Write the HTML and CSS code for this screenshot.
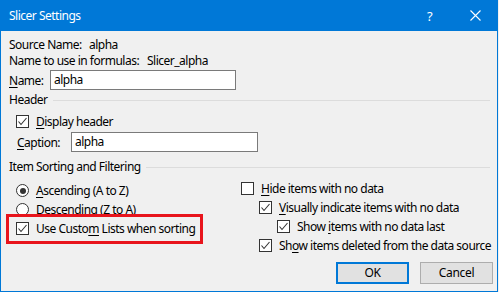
FILE: index.html
```html
<!DOCTYPE html>
<html>
<head>
<meta charset="utf-8">
<link rel="stylesheet" href="styles.css">
</head>
<body>
<div class="dialog">
  <div class="titlebar">
    <span class="title">Slicer Settings</span>
    <span class="tb-btn help">?</span>
    <span class="tb-btn close"><svg width="11" height="11" viewBox="0 0 11 11"><path d="M0.5 0.5 L10.5 10.5 M10.5 0.5 L0.5 10.5" stroke="#fff" stroke-width="1.1" fill="none"/></svg></span>
  </div>
  <div class="content">
    <div class="line first"><span class="lbl lbl-src">Source Name:</span><span>alpha</span></div>
    <div class="line"><span class="lbl lbl-formula">Name to use in formulas:</span><span>Slicer_alpha</span></div>
    <div class="field name-field"><span class="lbl lbl-name"><u>N</u>ame:</span><div class="textbox name-box">alpha</div></div>

    <div class="group-title header-title"><span>Header</span><span class="rule"></span></div>
    <div class="check-row display-row"><span class="cb checked"><svg width="11" height="11" viewBox="0 0 11 11"><path d="M1.5 5.5 L4 8.5 L9.5 2" stroke="#333" stroke-width="1.1" fill="none"/></svg></span><span><u>D</u>isplay header</span></div>
    <div class="field caption-field"><span class="lbl lbl-caption"><u>C</u>aption:</span><div class="textbox caption-box">alpha</div></div>

    <div class="group-title sort-title"><span>Item Sorting and Filtering</span><span class="rule"></span></div>
    <div class="columns">
      <div class="col-left">
        <div class="check-row opt"><span class="radio on"><span class="dot"></span></span><span><u>A</u>scending (A to Z)</span></div>
        <div class="check-row opt"><span class="radio"></span><span>Descending (Z to A)</span></div>
        <div class="check-row opt highlight"><span class="cb checked"><svg width="11" height="11" viewBox="0 0 11 11"><path d="M1.5 5.5 L4 8.5 L9.5 2" stroke="#333" stroke-width="1.1" fill="none"/></svg></span><span>Use Custo<u>m</u> Lists when sorting</span></div>
      </div>
      <div class="col-right">
        <div class="check-row ropt"><span class="cb"></span><span><u>H</u>ide items with no data</span></div>
        <div class="check-row ropt lvl1"><span class="cb checked"><svg width="11" height="11" viewBox="0 0 11 11"><path d="M1.5 5.5 L4 8.5 L9.5 2" stroke="#333" stroke-width="1.1" fill="none"/></svg></span><span><u>V</u>isually indicate items with no data</span></div>
        <div class="check-row ropt lvl2"><span class="cb checked"><svg width="11" height="11" viewBox="0 0 11 11"><path d="M1.5 5.5 L4 8.5 L9.5 2" stroke="#333" stroke-width="1.1" fill="none"/></svg></span><span>Show <u>i</u>tems with no data last</span></div>
        <div class="check-row ropt lvl1"><span class="cb checked"><svg width="11" height="11" viewBox="0 0 11 11"><path d="M1.5 5.5 L4 8.5 L9.5 2" stroke="#333" stroke-width="1.1" fill="none"/></svg></span><span>Sh<u>o</u>w items deleted from the data source</span></div>
      </div>
    </div>
    <div class="footer">
      <button class="btn default">OK</button>
      <button class="btn">Cancel</button>
    </div>
  </div>
</div>
</body>
</html>
```

FILE: styles.css
```css
html, body {
  margin: 0;
  padding: 0;
  background: #f0f0f0;
}
body {
  font-family: "Noto Sans", "Open Sans", sans-serif;
  font-size: 12px;
  letter-spacing: -0.5px;
  color: #000;
}
u {
  text-decoration-thickness: 1px;
  text-underline-offset: 2px;
}
.dialog {
  width: 498px;
  height: 292px;
  box-sizing: border-box;
  display: flex;
  flex-direction: column;
}
.titlebar {
  height: 31px;
  background: #0078d7;
  color: #fff;
  display: flex;
  align-items: center;
  flex: none;
}
.title {
  flex: 1;
  padding-left: 9px;
  font-size: 12px;
}
.tb-btn {
  width: 45px;
  height: 31px;
  display: flex;
  align-items: center;
  justify-content: center;
}
.help {
  margin-right: 1px;
  font-size: 13px;
}
.content {
  flex: 1;
  background: #f0f0f0;
  border: 1px solid #0078d7;
  border-top: none;
  padding-left: 8px;
  padding-right: 4px;
}
.lbl {
  flex: none;
}
.line {
  height: 16px;
  line-height: 16px;
  display: flex;
}
.line.first {
  margin-top: 6px;
}
.lbl-src { width: 80px; }
.lbl-formula { width: 138px; }
.field {
  display: flex;
  align-items: center;
  height: 20px;
}
.name-field { margin-top: 1px; }
.lbl-name { width: 41px; }
.caption-field { margin-top: 3px; padding-left: 8px; }
.lbl-caption { width: 54px; }
.textbox {
  box-sizing: border-box;
  height: 20px;
  line-height: 18px;
  background: #fff;
  border: 1px solid #7a7a7a;
  padding-left: 3px;
  flex: none;
}
.name-box { width: 186px; }
.caption-box { width: 187px; }
.group-title {
  height: 16px;
  line-height: 16px;
  display: flex;
  align-items: center;
}
.group-title .rule {
  flex: 1;
  height: 1px;
  background: #dcdcdc;
  margin-left: 5px;
  margin-right: 3px;
}
.header-title { margin-top: 2px; }
.sort-title { margin-top: 7px; }
.check-row {
  display: flex;
  align-items: center;
  white-space: nowrap;
}
.display-row {
  height: 16px;
  margin-top: 5px;
  padding-left: 7px;
}
.cb {
  box-sizing: border-box;
  width: 13px;
  height: 13px;
  border: 1px solid #333;
  background: #fff;
  margin-right: 7px;
  display: flex;
  align-items: center;
  justify-content: center;
  flex: none;
}
.radio {
  box-sizing: border-box;
  width: 13px;
  height: 13px;
  border: 1px solid #333;
  border-radius: 50%;
  background: #fff;
  margin-right: 7px;
  display: flex;
  align-items: center;
  justify-content: center;
  flex: none;
}
.radio .dot {
  width: 6px;
  height: 6px;
  border-radius: 50%;
  background: #333;
}
.columns {
  display: flex;
  height: 80px;
}
.col-left {
  flex: none;
  width: 225px;
  padding-top: 6px;
  padding-left: 7px;
}
.opt { height: 19px; }
.highlight {
  position: relative;
  width: 180px;
}
.highlight::before {
  content: "";
  position: absolute;
  left: -10px;
  top: -5px;
  width: 197px;
  height: 30px;
  box-sizing: border-box;
  border: 3px solid #e8141c;
}
.col-right {
  flex: none;
  padding-top: 4px;
}
.ropt { height: 19px; }
.lvl1 { padding-left: 18px; }
.lvl2 { padding-left: 36px; }
.footer {
  display: flex;
  justify-content: flex-end;
  gap: 11px;
  margin-top: 7px;
}
.btn {
  box-sizing: border-box;
  width: 73px;
  height: 22px;
  background: #e1e1e1;
  border: 1px solid #adadad;
  font-family: "Noto Sans", "Open Sans", sans-serif;
  font-size: 12px;
  letter-spacing: -0.3px;
  color: #000;
  padding: 0;
  line-height: 18px;
}
.btn.default {
  border: 2px solid #0078d7;
}
```
